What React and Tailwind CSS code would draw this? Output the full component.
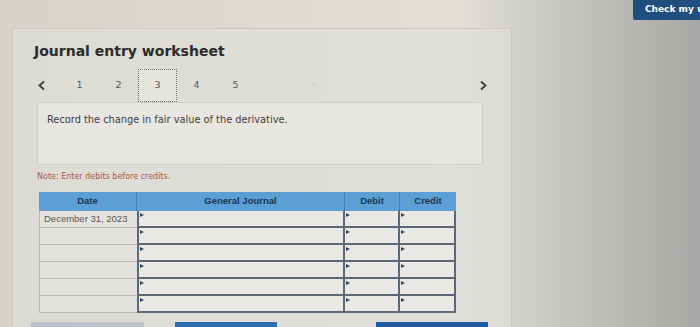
import React from "react";

const rows = ["December 31, 2023", "", "", "", "", ""];

const Marker = () => (
  <span className="absolute left-[1px] top-[2px] w-0 h-0 border-y-[2px] border-y-transparent border-l-[4px] border-l-[#2c4868]" />
);

const App = () => {
  return (
    <div
      className="relative w-[700px] h-[327px] overflow-hidden bg-linear-to-r from-[#d6d3cc] via-[#e2dfd9] via-65% to-[#a7a7a5]"
      style={{ fontFamily: "'DejaVu Sans', Verdana, sans-serif" }}
    >
      {/* top bar */}
      <div className="flex justify-end h-[20px]">
        <div className="w-[67px] h-[20px] bg-[#1f4e7f] rounded-bl-[2px] text-white text-[9px] font-bold pl-[12px] pt-[3px] whitespace-nowrap overflow-hidden">
          Check my work
        </div>
      </div>

      {/* worksheet panel */}
      <div className="ml-[12px] mt-[8px] w-[500px] h-[320px] border border-[#cdc9c1] bg-[#e0ded8]/70 pt-[13px]">
        <h2 className="pl-[21px] text-[14px] leading-[18px] font-bold text-[#2b2b2b]">
          Journal entry worksheet
        </h2>

        <div className="flex items-center ml-[24px] mt-[9px] w-[451px] h-[32px]">
          <span className="w-[23px] text-[#3a3a3a]">
            <svg width="9" height="11" viewBox="0 0 9 11">
              <path d="M7 1.5 L2.5 5.5 L7 9.5" fill="none" stroke="#3a3a3a" strokeWidth="1.8" />
            </svg>
          </span>
          {[1, 2, 3, 4, 5].map((n) => (
            <span
              key={n}
              className={`w-[39px] h-[33px] flex items-center justify-center text-[9.5px] text-[#555] ${
                n === 3 ? "border border-dotted border-[#6e6e6e] bg-[#e6e4df]" : ""
              }`}
            >
              {n}
            </span>
          ))}
          <span className="ml-[56px] text-[7px] text-[#c8c6c0]">×</span>
          <span className="ml-auto">
            <svg width="9" height="11" viewBox="0 0 9 11">
              <path d="M2 1.5 L6.5 5.5 L2 9.5" fill="none" stroke="#3a3a3a" strokeWidth="1.8" />
            </svg>
          </span>
        </div>

        <div className="ml-[24px] mt-px w-[446px] h-[63px] border border-[#d0cdc6] bg-[#e8e6e1] pl-[9px] pt-[10px] text-[9.8px] text-[#3d3d3d]">
          Record the change in fair value of the derivative.
        </div>

        <p className="ml-[24px] mt-[6px] text-[8px] text-[#a5594c]">Note: Enter debits before credits.</p>

        <div
          className="ml-[26px] mt-[9px] w-[417px]"
          style={{ fontFamily: "'Liberation Sans', Arial, sans-serif" }}
        >
          <div className="flex h-[19px] bg-[#5b9fd4] text-[#1d3552] text-[9.5px] font-bold">
            <div className="w-[98px] flex items-center justify-center border-r border-[#4a7ea8]">Date</div>
            <div className="w-[208px] flex items-center justify-center border-r border-[#4a7ea8]">General Journal</div>
            <div className="w-[55px] flex items-center justify-center border-r border-[#4a7ea8]">Debit</div>
            <div className="w-[56px] flex items-center justify-center">Credit</div>
          </div>
          {rows.map((d, i) => (
            <div key={i} className="flex h-[17px]">
              <div className="w-[98px] border-l border-b border-[#bcb9b2] bg-[#e4e2dd] pl-[4px] text-[9.5px] text-[#555] leading-[16px] whitespace-nowrap">
                {d}
              </div>
              <div className="relative w-[208px] border-x-2 border-b-2 border-[#5c6878] bg-[#e9e8e4]">
                <Marker />
              </div>
              <div className="relative w-[55px] border-r-2 border-b-2 border-[#5c6878] bg-[#e9e8e4]">
                <Marker />
              </div>
              <div className="relative w-[56px] border-r-2 border-b-2 border-[#5c6878] bg-[#e9e8e4]">
                <Marker />
              </div>
            </div>
          ))}
        </div>

        <div className="flex mt-[9px] h-[6px]">
          <div className="ml-[18px] w-[113px] bg-[#8aa1b8]/40" />
          <div className="ml-[31px] w-[102px] bg-[#2c6cb0]" />
          <div className="ml-[99px] w-[112px] bg-[#1f5ca5]" />
        </div>
      </div>
    </div>
  );
};

export default App;
